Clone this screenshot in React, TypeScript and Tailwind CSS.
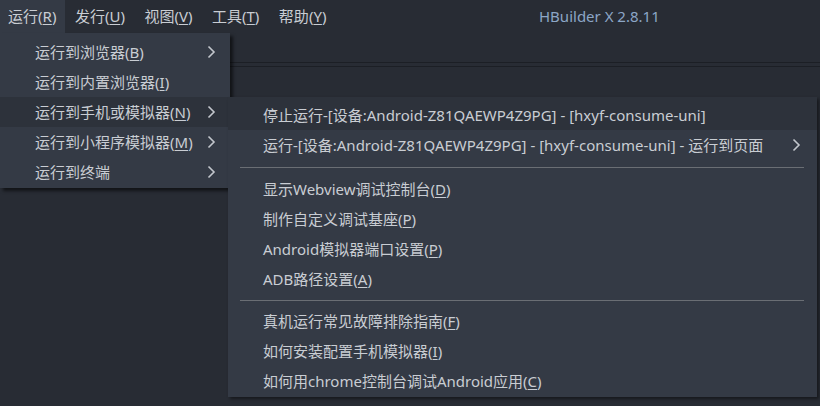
import React from 'react';

const font = { fontFamily: '"Noto Sans", "Noto Sans CJK SC", sans-serif' };

type Item = { label: string; key?: string; sub?: boolean; active?: boolean; sep?: boolean };

const mainItems: Item[] = [
  { label: '运行到浏览器', key: 'B', sub: true },
  { label: '运行到内置浏览器', key: 'I' },
  { label: '运行到手机或模拟器', key: 'N', sub: true, active: true },
  { label: '运行到小程序模拟器', key: 'M', sub: true },
  { label: '运行到终端', sub: true },
];

const subItems: Item[] = [
  { label: '停止运行-[设备:Android-Z81QAEWP4Z9PG] - [hxyf-consume-uni]', active: true },
  { label: '运行-[设备:Android-Z81QAEWP4Z9PG] - [hxyf-consume-uni] - 运行到页面', sub: true },
  { label: 'a', sep: true },
  { label: '显示Webview调试控制台', key: 'D' },
  { label: '制作自定义调试基座', key: 'P' },
  { label: 'Android模拟器端口设置', key: 'P' },
  { label: 'ADB路径设置', key: 'A' },
  { label: 'b', sep: true },
  { label: '真机运行常见故障排除指南', key: 'F' },
  { label: '如何安装配置手机模拟器', key: 'I' },
  { label: '如何用chrome控制台调试Android应用', key: 'C' },
];

const Chevron = () => (
  <svg width="9" height="14" viewBox="0 0 9 14" fill="none">
    <path d="M1.5 1.5 L7 7 L1.5 12.5" stroke="#c3c7cd" strokeWidth="1.6" />
  </svg>
);

const Label = ({ item }: { item: Item }) => (
  <span className="whitespace-nowrap">
    {item.label}
    {item.key && (
      <>
        (<u className="underline-offset-2">{item.key}</u>)
      </>
    )}
  </span>
);

const MenuRow = ({ item, cls }: { item: Item; cls: string }) => (
  <div className={`flex items-center pl-[35px] ${cls} ${item.active ? 'bg-[#2d323b]' : ''}`}>
    <div className="flex-1">
      <Label item={item} />
    </div>
    {item.sub && <Chevron />}
  </div>
);

export default function App() {
  const menus = [
    ['运行', 'R'],
    ['发行', 'U'],
    ['视图', 'V'],
    ['工具', 'T'],
    ['帮助', 'Y'],
  ];
  return (
    <div className="relative w-[820px] h-[406px] overflow-hidden bg-[#282c34] text-[#c9cdd3] text-[15px]" style={font}>
      {/* menubar */}
      <div className="relative flex items-stretch h-[33px]">
        {menus.map(([name, k], i) => (
          <div
            key={name}
            className={`flex items-center whitespace-nowrap ${i === 0 ? 'bg-[#343a45] pl-[8px] pr-[9px]' : 'pl-[9.5px] pr-[10px]'}`}
          >
            {name}(<u className="underline-offset-2">{k}</u>)
          </div>
        ))}
        <div className="absolute left-[539px] top-0 h-[33px] flex items-center text-[#8ca6c6] text-[15px]">
          HBuilder X 2.8.11
        </div>
      </div>
      <div className="h-[29px]" />
      <div className="h-px bg-[#1c1f25]" />
      <div className="h-[3px]" />
      <div className="h-px bg-[#1c1f25]" />

      {/* main dropdown */}
      <div className="absolute left-0 top-[33px] w-[230px] pt-[4px] pb-[1px] bg-[#343a45] shadow-[3px_3px_3px_rgba(0,0,0,0.55)]">
        {mainItems.map((it) => (
          <MenuRow key={it.label} item={it} cls="h-[30px] pr-[14px]" />
        ))}
      </div>

      {/* submenu */}
      <div className="absolute left-[228px] top-[97px] w-[589px] pb-[1px] bg-[#343a45] shadow-[2px_2px_3px_rgba(0,0,0,0.45)]">
        {subItems.map((it, i) =>
          it.sep ? (
            <div key={it.label} className={`${it.label === 'a' ? 'h-[14px]' : 'h-[12px]'} flex items-center pl-[12px] pr-[13px]`}>
              <div className="h-px w-full bg-[#6a6e74]" />
            </div>
          ) : (
            <MenuRow key={it.label} item={it} cls={`pr-[16px] ${i === 0 ? 'h-[33px] pt-[4px]' : 'h-[30px]'}`} />
          )
        )}
      </div>
    </div>
  );
}
